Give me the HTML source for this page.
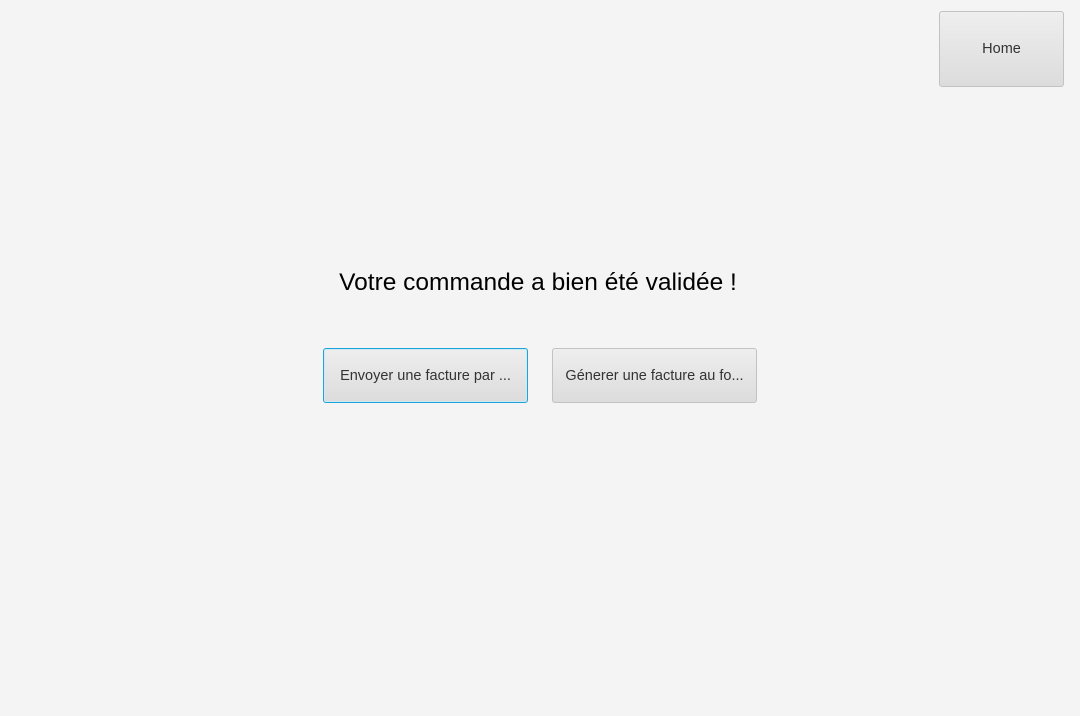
<!DOCTYPE html>
<html><head><meta charset="utf-8"><style>
html,body{margin:0;padding:0;width:1080px;height:716px;background:#f4f4f4;overflow:hidden;font-family:"Liberation Sans",sans-serif;}
.btn{position:absolute;box-sizing:border-box;border:1px solid #c2c2c2;border-radius:3px;background:linear-gradient(#eeeeee,#dcdcdc);color:#333;font-size:14.5px;display:flex;align-items:center;justify-content:center;white-space:nowrap;}
.focus{border:1px solid #1ea3d9;box-shadow:inset 0 0 0 1px #cfe9f5;}
h1{position:absolute;left:0;width:1076px;top:269px;margin:0;text-align:center;font-weight:normal;font-size:24.5px;color:#000;}
</style></head><body>
<div class="btn" style="left:939px;top:11px;width:125px;height:76px;">Home</div>
<h1>Votre commande a bien été validée !</h1>
<div class="btn focus" style="left:323px;top:348px;width:205px;height:55px;">Envoyer une facture par ...</div>
<div class="btn" style="left:552px;top:348px;width:205px;height:55px;">Génerer une facture au fo...</div>
</body></html>
